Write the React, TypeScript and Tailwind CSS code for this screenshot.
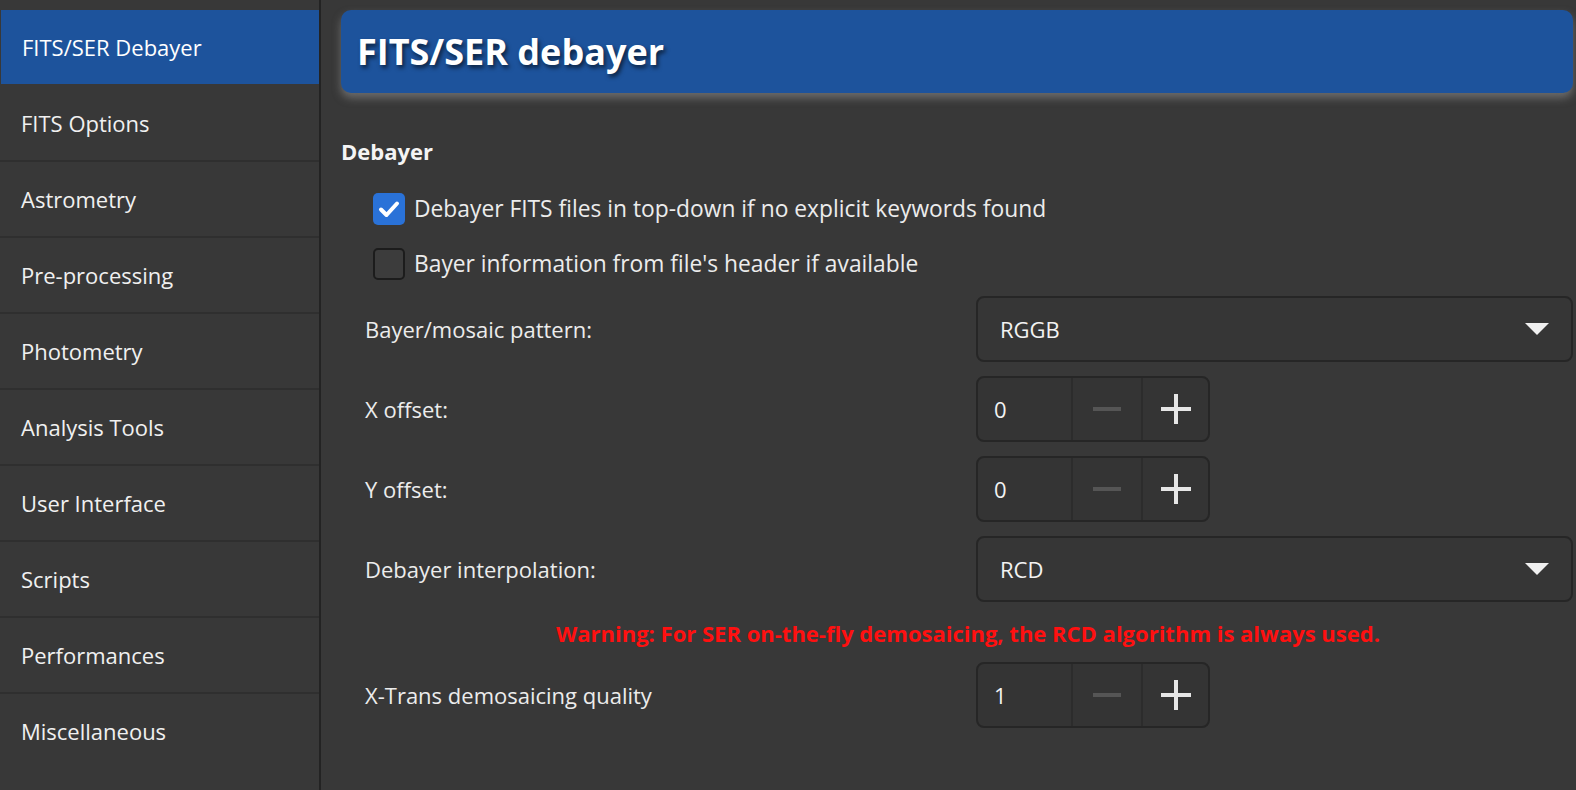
import React from "react";

const navItems = [
  "FITS/SER Debayer",
  "FITS Options",
  "Astrometry",
  "Pre-processing",
  "Photometry",
  "Analysis Tools",
  "User Interface",
  "Scripts",
  "Performances",
  "Miscellaneous",
];

const font = { fontFamily: '"Open Sans", "Noto Sans", sans-serif' };

function Check({ checked }: { checked: boolean }) {
  return checked ? (
    <span className="flex h-[32px] w-[32px] shrink-0 items-center justify-center rounded-[5px] bg-[#2a72d8]">
      <svg width="22" height="18" viewBox="0 0 22 18">
        <path d="M3 9.5 L8.5 15 L19 3.5" fill="none" stroke="#ffffff" strokeWidth="4" strokeLinecap="round" strokeLinejoin="round" />
      </svg>
    </span>
  ) : (
    <span className="h-[32px] w-[32px] shrink-0 rounded-[5px] border-2 border-[#1c1c1c] bg-[#3c3c3c]" />
  );
}

function Combo({ value }: { value: string }) {
  return (
    <div className="flex h-[66px] flex-1 items-center justify-between rounded-[8px] border-2 border-[#262626] bg-[#363636] pl-[22px] pr-[22px] text-[22px] text-[#f2f2f2]">
      <span>{value}</span>
      <svg width="24" height="14" viewBox="0 0 24 14">
        <path d="M0 1 H24 L12 13 Z" fill="#f0f0f0" />
      </svg>
    </div>
  );
}

function Spin({ value }: { value: string }) {
  return (
    <div className="flex h-[66px] w-[234px] overflow-hidden rounded-[8px] border-2 border-[#262626] bg-[#343434] text-[22px] text-[#f2f2f2]">
      <div className="flex w-[93px] items-center pl-[16px]">{value}</div>
      <div className="flex w-[70px] items-center justify-center border-l-2 border-[#2c2c2c]">
        <span className="block h-[4px] w-[28px] bg-[#555555]" />
      </div>
      <div className="flex flex-1 items-center justify-center border-l-2 border-[#2c2c2c]">
        <svg width="30" height="30" viewBox="0 0 30 30">
          <rect x="0" y="13" width="30" height="4" fill="#e6e6e6" />
          <rect x="13" y="0" width="4" height="30" fill="#e6e6e6" />
        </svg>
      </div>
    </div>
  );
}

function Row({ label, children }: { label: string; children: React.ReactNode }) {
  return (
    <div className="flex items-center">
      <div className="w-[635px] shrink-0 pl-[24px] text-[22px] text-[#ececec]">{label}</div>
      {children}
    </div>
  );
}

export default function App() {
  return (
    <div className="flex h-screen w-full overflow-hidden bg-[#383838]" style={font}>
      <aside className="flex w-[321px] shrink-0 flex-col border-r-2 border-[#232323] pt-[10px]">
        {navItems.map((item, i) => (
          <div
            key={item}
            className={`flex h-[76px] shrink-0 items-center border-b-2 pl-[21px] text-[22px] ${
              i === 0
                ? "ml-[1px] border-[#383838] bg-[#1d539c] text-white"
                : i === navItems.length - 1
                  ? "border-[#383838] text-[#f0f0f0]"
                  : "border-[#2f2f2f] text-[#f0f0f0]"
            }`}
          >
            {item}
          </div>
        ))}
      </aside>

      <main className="flex min-w-0 flex-1 flex-col pl-[20px] pr-[3px] pt-[10px]">
        <div className="flex h-[83px] shrink-0 items-center rounded-[10px] bg-[#1d539c] pl-[16px] shadow-[0_5px_9px_rgba(150,150,150,0.55)]">
          <h1
            className="text-[36px] font-bold text-white"
            style={{ textShadow: "2px 3px 4px rgba(0,0,0,0.6)" }}
          >
            FITS/SER debayer
          </h1>
        </div>

        <h2 className="mt-[43px] text-[22px] font-bold leading-[30px] text-[#f4f4f4]">Debayer</h2>

        <div className="mt-[26px] flex flex-col gap-[21px] pl-[32px]">
          <label className="flex h-[34px] items-center gap-[9px] text-[22.8px] text-[#ececec]">
            <Check checked />
            Debayer FITS files in top-down if no explicit keywords found
          </label>
          <label className="flex h-[34px] items-center gap-[9px] text-[22.8px] text-[#ececec]">
            <Check checked={false} />
            Bayer information from file's header if available
          </label>
        </div>

        <div className="mt-[15px] flex flex-col gap-[14px]">
          <Row label="Bayer/mosaic pattern:">
            <Combo value="RGGB" />
          </Row>
          <Row label="X offset:">
            <Spin value="0" />
          </Row>
          <Row label="Y offset:">
            <Spin value="0" />
          </Row>
          <Row label="Debayer interpolation:">
            <Combo value="RCD" />
          </Row>
        </div>

        <div className="mt-[16px] pl-[215px] text-[22px] font-bold leading-[30px] text-[#ff1010]">
          Warning: For SER on-the-fly demosaicing, the RCD algorithm is always used.
        </div>

        <div className="mt-[14px]">
          <Row label="X-Trans demosaicing quality">
            <Spin value="1" />
          </Row>
        </div>
      </main>
    </div>
  );
}
